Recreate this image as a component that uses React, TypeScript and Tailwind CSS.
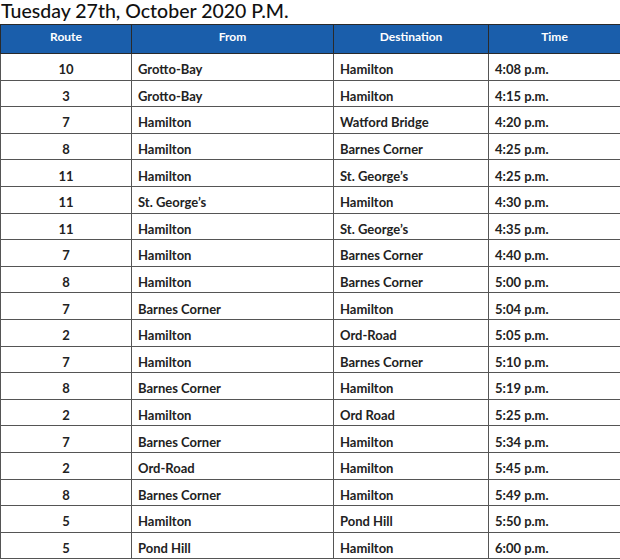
import React from 'react';

type Trip = [string, string, string, string];

const trips: Trip[] = [
  ['10', 'Grotto-Bay', 'Hamilton', '4:08 p.m.'],
  ['3', 'Grotto-Bay', 'Hamilton', '4:15 p.m.'],
  ['7', 'Hamilton', 'Watford Bridge', '4:20 p.m.'],
  ['8', 'Hamilton', 'Barnes Corner', '4:25 p.m.'],
  ['11', 'Hamilton', 'St. George’s', '4:25 p.m.'],
  ['11', 'St. George’s', 'Hamilton', '4:30 p.m.'],
  ['11', 'Hamilton', 'St. George’s', '4:35 p.m.'],
  ['7', 'Hamilton', 'Barnes Corner', '4:40 p.m.'],
  ['8', 'Hamilton', 'Barnes Corner', '5:00 p.m.'],
  ['7', 'Barnes Corner', 'Hamilton', '5:04 p.m.'],
  ['2', 'Hamilton', 'Ord-Road', '5:05 p.m.'],
  ['7', 'Hamilton', 'Barnes Corner', '5:10 p.m.'],
  ['8', 'Barnes Corner', 'Hamilton', '5:19 p.m.'],
  ['2', 'Hamilton', 'Ord Road', '5:25 p.m.'],
  ['7', 'Barnes Corner', 'Hamilton', '5:34 p.m.'],
  ['2', 'Ord-Road', 'Hamilton', '5:45 p.m.'],
  ['8', 'Barnes Corner', 'Hamilton', '5:49 p.m.'],
  ['5', 'Hamilton', 'Pond Hill', '5:50 p.m.'],
  ['5', 'Pond Hill', 'Hamilton', '6:00 p.m.'],
];

export default function App() {
  return (
    <div className="w-[620px] h-[560px] overflow-hidden bg-white font-['Lato','Liberation_Sans',sans-serif] text-[#222]">
      <h1 className="h-6 pl-px text-[19.5px] leading-[22px] font-medium text-[#111]">
        Tuesday 27th, October 2020 P.M.
      </h1>
      <table className="w-[620px] table-fixed border-collapse border border-[#2a2a2a]">
        <colgroup>
          <col className="w-[131px]" />
          <col className="w-[202px]" />
          <col className="w-[155px]" />
          <col className="w-[132px]" />
        </colgroup>
        <thead>
          <tr className="h-[29px] bg-[#1a5eab] text-white text-[12px] font-bold">
            <th className="border border-[#2a2a2a] text-center align-top pt-[3px]">Route</th>
            <th className="border border-[#2a2a2a] text-center align-top pt-[3px]">From</th>
            <th className="border border-[#2a2a2a] text-center align-top pt-[3px]">Destination</th>
            <th className="border border-[#2a2a2a] text-center align-top pt-[3px]">Time</th>
          </tr>
        </thead>
        <tbody className="text-[13px] font-bold leading-[15px]">
          {trips.map((t, i) => (
            <tr key={i} className="h-[26.6px]">
              <td className="border border-[#555] text-center pt-[6px]">{t[0]}</td>
              <td className="border border-[#555] px-[6px] pt-[6px]">{t[1]}</td>
              <td className="border border-[#555] px-[6px] pt-[6px]">{t[2]}</td>
              <td className="border border-[#555] px-[6px] pt-[6px]">{t[3]}</td>
            </tr>
          ))}
        </tbody>
      </table>
    </div>
  );
}
